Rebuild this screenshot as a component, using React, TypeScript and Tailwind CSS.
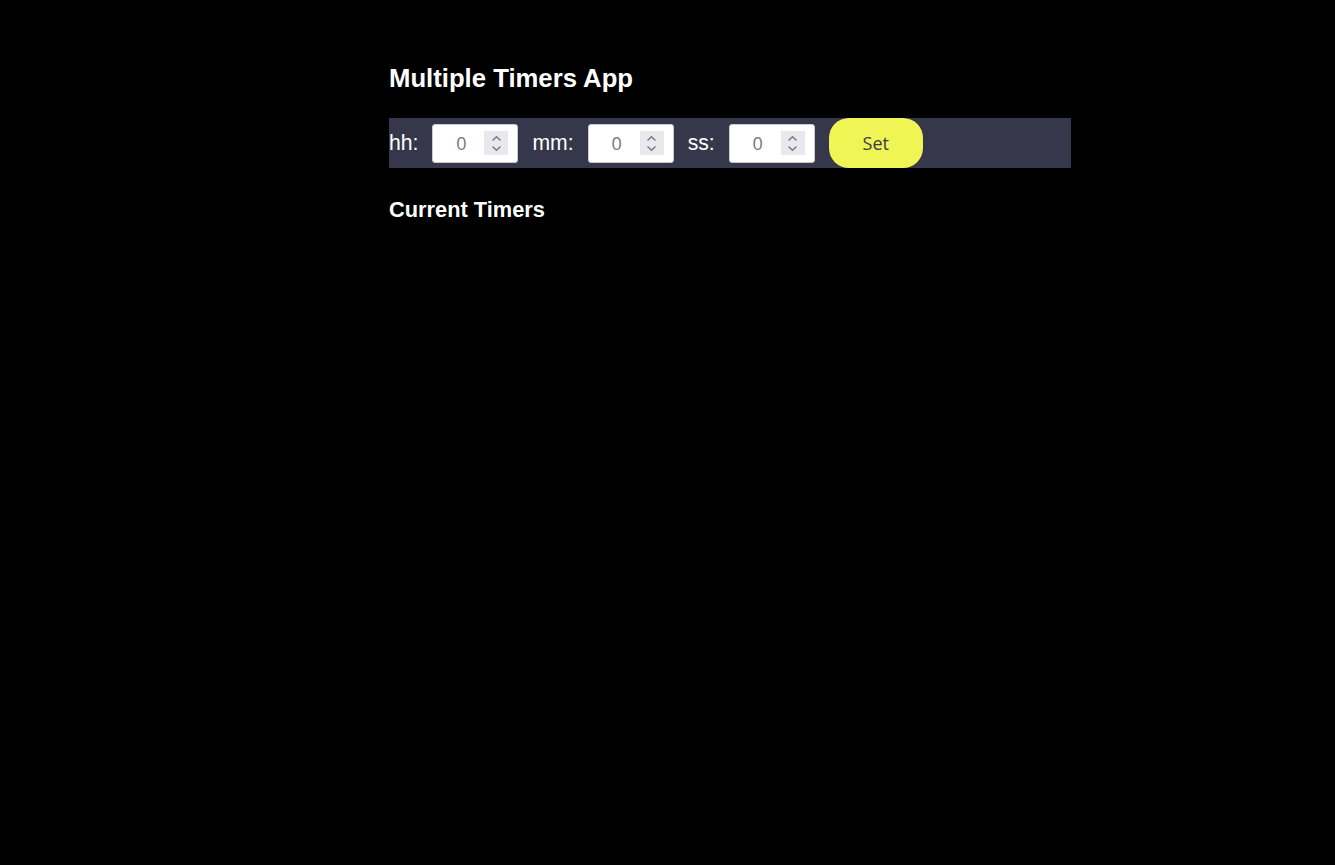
import { useState } from "react"

function Spinner() {
  return (
    <div className="flex h-[24px] w-[24px] flex-col items-center justify-center bg-[#e9e9ed]">
      <svg width="11" height="7" viewBox="0 0 11 7" className="mb-[3px]">
        <path d="M1.5 5.5 L5.5 1.8 L9.5 5.5" fill="none" stroke="#7a7a82" strokeWidth="1.5" />
      </svg>
      <svg width="11" height="7" viewBox="0 0 11 7">
        <path d="M1.5 1.5 L5.5 5.2 L9.5 1.5" fill="none" stroke="#7a7a82" strokeWidth="1.5" />
      </svg>
    </div>
  )
}

function TimeField({ label, value }: { label: string; value: number }) {
  return (
    <>
      <span className="text-[21.2px] text-white">{label}</span>
      <div className="flex h-[39px] w-[86px] items-center rounded-[3px] border border-[#c9c9d0] bg-white pr-[9px]">
        <span className="flex-1 pl-[5px] text-center font-['Open_Sans',sans-serif] text-[18px] text-[#757575]">
          {value}
        </span>
        <Spinner />
      </div>
    </>
  )
}

export default function App() {
  const [hh] = useState(0)
  const [mm] = useState(0)
  const [ss] = useState(0)

  return (
    <div className="min-h-[865px] bg-black font-['Liberation_Sans',Arial,sans-serif]">
      <div className="ml-[389px] w-[682px] pt-[63px]">
        <h1 className="text-[25.7px] font-bold leading-[30px] text-white">Multiple Timers App</h1>

        <div className="mt-[25px] flex h-[50px] items-center gap-[14px] bg-[#37374c]">
          <TimeField label="hh:" value={hh} />
          <TimeField label="mm:" value={mm} />
          <TimeField label="ss:" value={ss} />
          <button className="h-[50px] w-[94px] rounded-[20px] bg-[#f0f556] font-['Open_Sans',sans-serif] text-[18px] text-[#3a3a48]">
            Set
          </button>
        </div>

        <h2 className="mt-[29px] text-[21.8px] font-bold leading-[26px] text-white">Current Timers</h2>
      </div>
    </div>
  )
}
